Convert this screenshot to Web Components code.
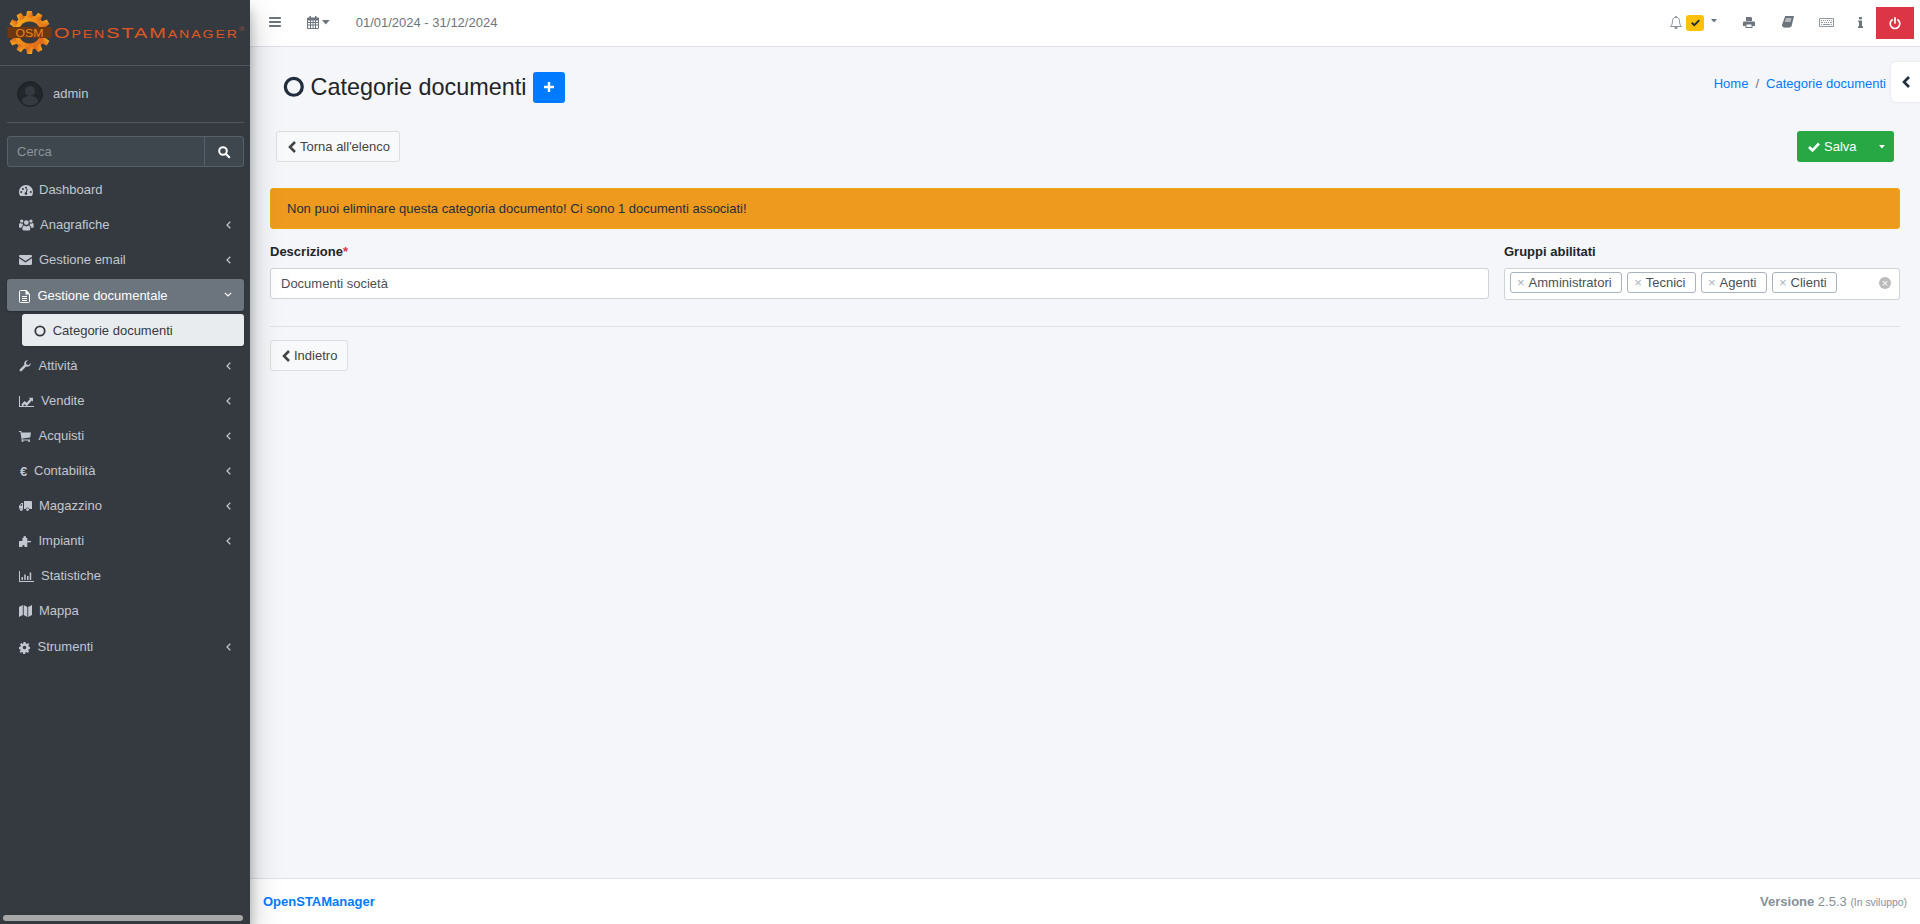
<!DOCTYPE html>
<html lang="it">
<head>
<meta charset="utf-8">
<title>Categorie documenti</title>
<style>
  html, body { margin: 0; height: 100%; }
  body { font: 13px/1.5 "Liberation Sans", Arial, sans-serif; color: #212529; overflow: hidden; }
</style>
</head>
<body>
<osm-app>
  <osm-sidebar slot="sidebar">
    <osm-nav-item icon="dashboard" w="20">Dashboard</osm-nav-item>
    <osm-nav-item icon="users" w="21" size="1.05" arrow>Anagrafiche</osm-nav-item>
    <osm-nav-item icon="envelope" w="20" arrow>Gestione email</osm-nav-item>
    <osm-nav-item icon="file" w="18.5" arrow open active style="margin-top:1px">Gestione documentale</osm-nav-item>
    <osm-nav-item icon="circle" w="18.7" sub>Categorie documenti</osm-nav-item>
    <osm-nav-item icon="wrench" w="19.5" arrow>Attività</osm-nav-item>
    <osm-nav-item icon="linechart" w="22" arrow>Vendite</osm-nav-item>
    <osm-nav-item icon="cart" w="19.5" arrow>Acquisti</osm-nav-item>
    <osm-nav-item icon="euro" w="15" arrow>Contabilità</osm-nav-item>
    <osm-nav-item icon="truck" w="20" arrow>Magazzino</osm-nav-item>
    <osm-nav-item icon="puzzle" w="19.5" arrow>Impianti</osm-nav-item>
    <osm-nav-item icon="barchart" w="22">Statistiche</osm-nav-item>
    <osm-nav-item icon="map" w="20">Mappa</osm-nav-item>
    <osm-nav-item icon="cog" w="18.5" arrow style="margin-top:1px">Strumenti</osm-nav-item>
  </osm-sidebar>
  <osm-topbar slot="topbar"></osm-topbar>
  <osm-page slot="page"></osm-page>
  <osm-footer slot="footer"></osm-footer>
</osm-app>

<script>
// icon shapes, all filled with currentColor unless they say otherwise
const ICONS = {
  dashboard: [14, 11, '<path fill-rule="evenodd" d="M7 0C3.1 0 0 3.1 0 7c0 1.5.4 2.9 1.2 4h11.6c.8-1.1 1.2-2.5 1.2-4 0-3.9-3.1-7-7-7zM1.2 7a1 1 0 1 0 2 0 1 1 0 1 0-2 0zM2.9 4a1 1 0 1 0 2 0 1 1 0 1 0-2 0zM6 2.800a1 1 0 1 0 2 0 1 1 0 1 0-2 0zM10.800 7a1 1 0 1 0 2 0 1 1 0 1 0-2 0zM5.600 8.500a1.400 1.400 0 1 0 2.800 0c0-.5-.2-.9-.6-1.100l.9-3.400-1-.3-.9 3.400c-.7.1-1.200.7-1.200 1.400z"/>'],
  users: [14, 11, '<circle cx="7" cy="3.400" r="2.300"/><path d="M3.400 10.200c-.3-1 0-3.900 1.400-3.900.6.5 1.300.8 2.200.8s1.600-.3 2.200-.8c1.400 0 1.700 2.900 1.400 3.900-.2.5-.6.8-1.100.8H4.500c-.5 0-.9-.3-1.100-.8z"/><circle cx="2.600" cy="2" r="1.600"/><circle cx="11.400" cy="2" r="1.600"/><path d="M0 6.200C0 5 .3 3.900 1.200 3.900c.5.4 1 .6 1.600.6.1 0 .4 0 .7-.1-.1.5.1 1.100.5 1.500-.8.3-1.500 1.100-1.700 2.500H.9C.3 8.400 0 7.900 0 6.200zM14 6.200c0-1.200-.3-2.300-1.200-2.300-.5.4-1 .6-1.600.6-.1 0-.4 0-.7-.1.1.5-.1 1.100-.5 1.500.8.3 1.500 1.100 1.700 2.500h1.400c.6 0 .9-.5.9-2.200z"/>'],
  envelope: [13, 10, '<path d="M0 1.200C0 .5.5 0 1.200 0h10.600c.7 0 1.200.5 1.200 1.200v.6L6.500 6 0 1.800z"/><path d="M0 3.200l6.500 4.200L13 3.200v5.600c0 .7-.5 1.200-1.200 1.200H1.200C.5 10 0 9.500 0 8.800z"/>'],
  file: [11, 13, '<path fill="none" stroke="currentColor" d="M1.500.5h5.300l3.700 3.700v7.300a1 1 0 0 1-1 1h-8a1 1 0 0 1-1-1v-10a1 1 0 0 1 1-1z"/><path d="M6.500 0h1l3 3.500v1H6.500zM3 6h5v1H3zM3 8h5v1H3zM3 10h5v1H3z"/>'],
  circle: [12, 12, '<circle cx="6" cy="6" r="4.700" fill="none" stroke="currentColor" stroke-width="1.800"/>'],
  wrench: [12, 12, '<path d="M11.800 3a3.500 3.500 0 0 1-4.700 3.600L2.800 11a1.300 1.300 0 0 1-1.900-1.800L5.300 4.800A3.500 3.500 0 0 1 9 .2L7 2.200l.4 2.300 2.400.5z"/>'],
  linechart: [15, 11, '<path d="M0 0h1v10h14v1H0z"/><path d="M2.500 8.300l3-3.300 2.200 1.800 3.300-3.800-1.200-1.200H14v4l-1.200-1.300-5 5.700-2.300-2-2.300 2.700z"/>'],
  barchart: [15, 11, '<path d="M0 0h1v10h14v1H0zM2.500 6H4v3H2.500zM5.200 3.500h1.500V9H5.200zM8 5h1.500v4H8zM10.700 1.500h1.500V9h-1.500z"/>'],
  cart: [12, 11, '<path d="M0 0h2.200l.4 1.500H12l-.8 5-7.800 1 .2.900H11v1H2.800L1.400 1H0z"/><circle cx="3.500" cy="10" r="1"/><circle cx="10" cy="10" r="1"/>'],
  truck: [13, 10, '<path d="M5 0h7a1 1 0 0 1 1 1v7H10.500a2 2 0 0 0-3.900 0H5z"/><path fill-rule="evenodd" d="M4 2v6h-.6a2 2 0 0 0-2.800-.4V8H0V5l2.300-3zM1.100 4.800h2V3H2.500z"/><circle cx="2.300" cy="8.600" r="1.400"/><circle cx="8.600" cy="8.600" r="1.400"/>'],
  puzzle: [12, 11, '<path d="M3.400 2h1.300C4.300 1.500 4.200 1.100 4.500.6 5.100-.2 6.400-.2 7 .6c.3.5.2.9-.2 1.400h1.500v3.300c.5-.5 1-.7 1.600-.5.3.1.5.3.9.2.3 0 .6-.1 1.200-.1v1.400c-.6-.1-.9-.2-1.200-.1-.4 0-.6.2-.9.3-.6.2-1.100 0-1.600-.5V11H5.400c.3-.4.4-1 0-1.500-.5-.7-1.400-.7-1.900 0-.4.5-.3 1.100 0 1.500H0V5h3.400z"/>'],
  map: [13, 12, '<path d="M0 2l3.800-2v10L0 12zM4.700 0l3.600 2v10l-3.600-2zM13 0v10l-3.800 2V2z"/>'],
  cog: [11, 11, '<path fill-rule="evenodd" d="M4.500 0h2l.3 1.500 1.100.5L9.200 1l1 1.200-.9 1.300.4 1.100 1.300.4v1.900l-1.300.3-.5 1.100.9 1.300-1.300 1.300-1.300-.9-1.100.4-.3 1.500h-2l-.2-1.500-1.100-.4-1.300.9L.7 9.600l.9-1.300-.5-1.100L0 6.900V5l1.400-.3.500-1.100-.9-1.300L2.300 1l1.300.9.700-.4zM3.700 5.500a1.800 1.800 0 1 0 3.600 0 1.800 1.800 0 1 0-3.600 0z"/>'],
  search: [12, 12, '<circle cx="5" cy="5" r="3.800" fill="none" stroke="currentColor" stroke-width="2"/><path d="M7.500 9L9 7.500l3 3a1 1 0 0 1-1.500 1.500z"/>'],
  bars: [12, 10, '<path d="M.7 0h10.600a.7.7 0 0 1 .7.7v.6a.7.7 0 0 1-.7.7H.7a.7.7 0 0 1-.7-.7V.7A.7.7 0 0 1 .7 0zM.7 4h10.600a.7.7 0 0 1 .7.7v.6a.7.7 0 0 1-.7.7H.7a.7.7 0 0 1-.7-.7v-.6A.7.7 0 0 1 .7 4zM.7 8h10.600a.7.7 0 0 1 .7.7v.6a.7.7 0 0 1-.7.7H.7a.7.7 0 0 1-.7-.7v-.6A.7.7 0 0 1 .7 8z"/>'],
  calendar: [12, 13, '<path fill-rule="evenodd" d="M2.500 0h1.500v1.500h4V0h1.500v1.500H11a1 1 0 0 1 1 1V12a1 1 0 0 1-1 1H1a1 1 0 0 1-1-1V2.500a1 1 0 0 1 1-1h1.500zM1 4.500V6h2V4.500zM4 4.500V6h1.600V4.500zM6.500 4.500V6H8V4.500zM9 4.500V6h2V4.500zM1 7v1.500h2V7zM4 7v1.500h1.600V7zM6.500 7v1.500H8V7zM9 7v1.500h2V7zM1 9.500V12h2V9.500zM4 9.500V12h1.600V9.500zM6.500 9.500V12H8V9.500zM9 9.500V12h2V9.500z"/>'],
  caret: [7, 4, '<path d="M0 0h7L3.500 4z"/>'],
  bell: [12, 13, '<path fill="none" stroke="currentColor" stroke-width=".8" d="M6 1.200c2.300 0 3.500 1.700 3.500 3.600 0 3 .7 4.300 1.900 5.700H.6c1.200-1.400 1.900-2.700 1.900-5.700C2.500 2.900 3.700 1.200 6 1.200z"/><path d="M5.400 0h1.200v1.500H5.400zM4.500 11.300h3A1.500 1.500 0 0 1 6 13a1.500 1.500 0 0 1-1.500-1.700z"/>'],
  print: [12, 11, '<path fill-rule="evenodd" d="M3 0h5l1 1v3H3zM1 4.500h10a1 1 0 0 1 1 1V9H9.500v2h-7V9H0V5.500a1 1 0 0 1 1-1zM3.500 7.500V10h5V7.500z"/>'],
  book: [12, 12, '<path fill-rule="evenodd" d="M3.200 0H12l-.2 1-2.200 9a1.400 1.400 0 0 1-1.300 1H1.500C.6 11 0 10.200 0 9.300c0-.3 0-.5.1-.8zM3.800 2.500l-.2 1h5.600l.2-1zM3.200 4.500l-.2 1h5.600l.2-1z"/><path d="M1.300 10h7.200l-.2 1.200-.8.800H1.500z" opacity=".6"/>'],
  keyboard: [15, 9, '<path fill-rule="evenodd" opacity=".75" d="M1 0h13a1 1 0 0 1 1 1v7a1 1 0 0 1-1 1H1a1 1 0 0 1-1-1V1a1 1 0 0 1 1-1zM1 1v7h13V1zM2 2h1v1H2zM4 2h1v1H4zM6 2h1v1H6zM8 2h1v1H8zM10 2h1v1h-1zM12 2h1v1h-1zM2 4h2v1H2zM5 4h1v1H5zM7 4h1v1H7zM9 4h1v1H9zM11 4h2v1h-2zM2 6h1v1H2zM4 6h7v1H4zM12 6h1v1h-1z"/>'],
  info: [5, 11, '<path d="M1 0h3v2.200H1zM.3 3.400H4v5.800h1V11H0V9.200h1V5.300H.3z"/>'],
  power: [12, 12, '<path fill="none" stroke="currentColor" stroke-width="1.700" stroke-linecap="round" d="M3.200 2.800a4.800 4.800 0 1 0 5.600 0M6 .9v5"/>'],
  check: [12, 10, '<path fill="none" stroke="currentColor" stroke-width="2.600" d="M1 5l3.500 3.300L11 1.500"/>'],
  plus: [10, 10, '<path d="M3.800 0h2.400v3.800H10v2.400H6.200V10H3.800V6.200H0V3.800h3.800z"/>'],
  chevron: [8, 12, '<path fill="none" stroke="currentColor" stroke-width="2.600" d="M7 1L2 6l5 5"/>'],
  thinleft: [5, 8, '<path fill="none" stroke="currentColor" stroke-width="1.200" d="M4.300.8L1 4l3.300 3.200"/>'],
  thindown: [8, 5, '<path fill="none" stroke="currentColor" stroke-width="1.200" d="M.8.8L4 4 7.200.8"/>']
};

class OsmIcon extends HTMLElement {
  static get observedAttributes() { return ['name', 'size']; }
  constructor() {
    super();
    this.attachShadow({ mode: 'open' });
  }
  connectedCallback() { this.render(); }
  attributeChangedCallback() { this.render(); }
  render() {
    const icon = ICONS[this.getAttribute('name')];
    if (!icon) return;
    const scale = parseFloat(this.getAttribute('size') || '1');
    const [w, h, body] = icon;
    this.shadowRoot.innerHTML = `
      <style>
        :host { display: inline-flex; align-items: center; justify-content: center; flex: none; }
        svg { display: block; fill: currentColor; overflow: visible; }
      </style>
      <svg width="${w * scale}" height="${h * scale}" viewBox="0 0 ${w} ${h}">${body}</svg>`;
  }
}
customElements.define('osm-icon', OsmIcon);

class OsmApp extends HTMLElement {
  constructor() {
    super();
    this.attachShadow({ mode: 'open' }).innerHTML = `
      <style>
        :host { display: grid; grid-template-columns: 250px 1fr; height: 924px; background: #f4f6f9; }
        .side { display: block; position: relative; z-index: 2;
                box-shadow: 0 14px 28px rgba(0,0,0,.25), 0 10px 10px rgba(0,0,0,.22); }
        .main { display: flex; flex-direction: column; min-width: 0; }
        .grow { flex: 1; min-height: 0; display: flex; flex-direction: column; }
      </style>
      <div class="side"><slot name="sidebar"></slot></div>
      <div class="main">
        <slot name="topbar"></slot>
        <div class="grow"><slot name="page"></slot></div>
        <slot name="footer"></slot>
      </div>`;
  }
}
customElements.define('osm-app', OsmApp);

class OsmLogo extends HTMLElement {
  constructor() {
    super();
    this.attachShadow({ mode: 'open' }).innerHTML = `
      <style>
        :host { display: flex; align-items: center; height: 66px; padding-left: 7px; box-sizing: border-box;
                border-bottom: 1px solid #4b545c; }
        svg { flex: none; display: block; }
        .name { margin-left: 2px; color: #e2561f; font-size: 15.500px; line-height: 1; white-space: nowrap;
                font-family: "Liberation Sans", sans-serif; font-variant: small-caps; letter-spacing: 1.500px;
                transform: scale(1.284, .98); transform-origin: left center; }
        sup { font-size: 6px; color: #a8523a; vertical-align: 7px; letter-spacing: 0; line-height: 0; }
      </style>
      <svg width="45" height="45" viewBox="-22.500 -22.500 45 45">
        <defs>
          <linearGradient id="g" x1="0" y1="0" x2="1" y2=".6">
            <stop offset="0" stop-color="#f6b81c"/><stop offset="1" stop-color="#e2661a"/>
          </linearGradient>
        </defs>
        <g fill="url(#g)">
          <circle r="17"/>
          ${[0, 30, 60, 90, 120, 150, 180, 210, 240, 270, 300, 330].map(a =>
            `<path transform="rotate(${a})" d="M-3.500 -15L-2.500 -21.500H2.500L3.500 -15z"/>`).join('')}
        </g>
        <circle r="11" fill="#3a3a3a"/>
        <rect x="-22" y="-5.500" width="44" height="11" fill="#6e3711"/>
        <text x="0" y="4" text-anchor="middle" font-family="Liberation Sans, sans-serif" font-size="11.500"
              fill="#e8891e" textLength="28" lengthAdjust="spacingAndGlyphs">OSM</text>
      </svg>
      <span class="name">OpenSTAManager<sup>®</sup></span>`;
  }
}
customElements.define('osm-logo', OsmLogo);

class OsmSidebar extends HTMLElement {
  constructor() {
    super();
    this.attachShadow({ mode: 'open' }).innerHTML = `
      <style>
        :host { display: flex; flex-direction: column; height: 924px; background: #343a40; color: #c2c7d0; }
        .user { display: flex; align-items: center; gap: 10px; height: 57px; box-sizing: border-box; margin: 0 6px 0 7px;
                padding: 0 0 1px 10px; border-bottom: 1px solid #4f5962; }
        .user svg { display: block; }
        form { display: flex; height: 31px; margin: 13px 6px 6px 7px; box-sizing: border-box;
               border: 1px solid #56606a; border-radius: 3px; background: #3f474e; }
        .q { flex: 1; padding-left: 9px; line-height: 29px; color: #8d949b; }
        .btn { width: 38px; border-left: 1px solid #56606a; display: flex; align-items: center; justify-content: center; color: #fff; }
        nav { display: flex; flex-direction: column; gap: 3px; margin: 0 6px 0 7px; }
        .bar { margin: auto 7px 3px 3px; height: 6px; border-radius: 3px; background: #a8a8a8; }
      </style>
      <osm-logo></osm-logo>
      <div class="user">
        <svg width="26" height="26" viewBox="0 0 26 26">
          <circle cx="13" cy="13" r="12.300" fill="#22272c" stroke="#191d21" stroke-width="1"/>
          <circle cx="13" cy="10" r="5" fill="#343a40"/>
          <path d="M4.500 21c1-4.500 4-6 8.500-6s7.500 1.500 8.500 6a12 12 0 0 1-17 0z" fill="#343a40"/>
        </svg>
        <span>admin</span>
      </div>
      <form>
        <div class="q">Cerca</div>
        <div class="btn"><osm-icon name="search"></osm-icon></div>
      </form>
      <nav><slot></slot></nav>
      <div class="bar"></div>`;
  }
}
customElements.define('osm-sidebar', OsmSidebar);

class OsmNavItem extends HTMLElement {
  constructor() {
    super();
    this.attachShadow({ mode: 'open' });
  }
  connectedCallback() {
    const name = this.getAttribute('icon');
    const w = this.getAttribute('w');
    const size = this.getAttribute('size') || '1';
    const glyph = name === 'euro'
      ? '<b class="euro">€</b>'
      : `<osm-icon name="${name}" size="${size}"></osm-icon>`;
    const arrow = this.hasAttribute('open')
      ? '<osm-icon class="arrow down" name="thindown"></osm-icon>'
      : this.hasAttribute('arrow') ? '<osm-icon class="arrow" name="thinleft"></osm-icon>' : '';
    this.shadowRoot.innerHTML = `
      <style>
        :host { display: flex; align-items: center; height: 32px; box-sizing: border-box; padding: 2px 0 0 12px;
                border-radius: 3px; color: #c2c7d0; }
        :host([active]) { background: #6c757d; color: #fff; box-shadow: 0 1px 2px rgba(0,0,0,.25); }
        :host([sub]) { margin-left: 15px; background: #e9ecef; color: #343a40; box-shadow: 0 1px 3px rgba(0,0,0,.12); }
        .i { display: flex; align-items: center; flex: none; width: ${w}px; }
        .euro { font-size: 13px; line-height: 1; padding-left: 1px; }
        .label { flex: 1; white-space: nowrap; }
        .arrow { margin-right: 13.500px; color: #c2c7d0; }
        .arrow.down { margin-right: 12px; margin-top: -3px; color: #fff; }
      </style>
      <span class="i">${glyph}</span>
      <span class="label"><slot></slot></span>
      ${arrow}`;
  }
}
customElements.define('osm-nav-item', OsmNavItem);

class OsmTopbar extends HTMLElement {
  constructor() {
    super();
    this.attachShadow({ mode: 'open' }).innerHTML = `
      <style>
        :host { display: flex; align-items: center; height: 47px; box-sizing: border-box; flex: none;
                background: #fff; border-bottom: 1px solid #dee2e6; color: #6c757d; padding: 0 6px 2px 19px; }
        .cal { display: flex; align-items: center; gap: 3px; margin-left: 26px; }
        .date { margin-left: 26px; padding-top: 1px; }
        .right { margin-left: auto; display: flex; align-items: center; height: 44px; }
        .bell { display: flex; align-items: center; width: 70px; padding-left: 10px; box-sizing: border-box; }
        .badge { display: flex; align-items: center; justify-content: center; width: 18px; height: 16px; margin-left: 4px;
                 margin-top: 2px; border-radius: 3px; background: #ffc107; color: #1f2d3d; }
        .drop { margin-left: 7px; margin-top: -2px; }
        .cell { display: flex; align-items: center; justify-content: center; width: 38px; }
        .off { display: flex; align-items: center; justify-content: center; width: 38px; height: 32px;
               margin-top: 2px; background: #dc3545; color: #fff; }
      </style>
      <osm-icon name="bars"></osm-icon>
      <div class="cal"><osm-icon name="calendar"></osm-icon><osm-icon name="caret" size="1.100"></osm-icon></div>
      <div class="date">01/01/2024 - 31/12/2024</div>
      <div class="right">
        <div class="bell">
          <osm-icon name="bell"></osm-icon>
          <span class="badge"><osm-icon name="check" size=".75"></osm-icon></span>
          <osm-icon class="drop" name="caret" size=".85"></osm-icon>
        </div>
        <div class="cell"><osm-icon name="print"></osm-icon></div>
        <div class="cell" style="width:39px"><osm-icon name="book"></osm-icon></div>
        <div class="cell"><osm-icon name="keyboard"></osm-icon></div>
        <div class="cell" style="width:31px"><osm-icon name="info"></osm-icon></div>
        <div class="off"><osm-icon name="power"></osm-icon></div>
      </div>`;
  }
}
customElements.define('osm-topbar', OsmTopbar);

class OsmButton extends HTMLElement {
  constructor() {
    super();
    this.attachShadow({ mode: 'open' }).innerHTML = `
      <style>
        :host { display: inline-flex; align-items: center; gap: 4px; height: 31px; box-sizing: border-box; padding: 0 9.500px 0 11px;
                border: 1px solid #ddd; border-radius: 3px; background: #f8f9fa; color: #444; white-space: nowrap; }
      </style>
      <osm-icon name="chevron"></osm-icon><slot></slot>`;
  }
}
customElements.define('osm-button', OsmButton);

class OsmChip extends HTMLElement {
  constructor() {
    super();
    this.attachShadow({ mode: 'open' }).innerHTML = `
      <style>
        :host { display: inline-flex; align-items: center; height: 21px; box-sizing: border-box; padding: 0 9.500px 0 6px;
                border: 1px solid #aab2bd; border-radius: 3px; background: #fff; color: #495057; white-space: nowrap; }
        i { font-style: normal; color: #aab2bd; margin-right: 4px; }
      </style>
      <i>×</i><slot></slot>`;
  }
}
customElements.define('osm-chip', OsmChip);

class OsmPage extends HTMLElement {
  constructor() {
    super();
    this.attachShadow({ mode: 'open' }).innerHTML = `
      <style>
        :host { display: block; position: relative; flex: 1; }
        header { display: flex; justify-content: space-between; height: 84px; box-sizing: border-box;
                 padding: 24px 34px 0 33px; }
        .title { display: flex; align-items: center; height: 32px; color: #1f2d3d; }
        h1 { margin: 0 0 0 6px; font-size: 23.400px; font-weight: 400; line-height: 32px; color: #212529; white-space: nowrap; }
        .add { display: flex; align-items: center; justify-content: center; width: 32px; height: 31px; margin-left: 7px;
               border-radius: 3px; background: #007bff; color: #fff; }
        .crumbs { display: flex; gap: 7px; height: 26px; line-height: 26px; color: #6c757d; }
        a { color: #007bff; text-decoration: none; }
        .tools { display: flex; justify-content: space-between; padding: 0 26px; margin-bottom: 26px; }
        .save { display: flex; height: 31px; border-radius: 3px; background: #28a745; color: #fff; }
        .save .go { display: flex; align-items: center; gap: 4px; padding-left: 11px; width: 73px; box-sizing: border-box; }
        .save .more { display: flex; align-items: center; justify-content: center; width: 24px; }
        .body { padding: 0 20px; }
        .alert { display: flex; align-items: center; height: 41px; box-sizing: border-box; padding: 0 16px; margin-bottom: 13px;
                 background: #ee9a1f; border: 1px solid #eca70f; border-radius: 3px; color: #1f2d3d; }
        .grid { display: grid; grid-template-columns: 1fr 396px; column-gap: 15px; }
        label { display: block; font-weight: 700; line-height: 20px; margin-bottom: 6px; color: #212529; white-space: nowrap; }
        label b { color: #dc3545; }
        .input { height: 31px; box-sizing: border-box; padding: 0 10px; line-height: 29px; background: #fff; color: #495057;
                 border: 1px solid #ced4da; border-radius: 3px; }
        .multi { display: flex; align-items: flex-start; gap: 5px; height: 32px; box-sizing: border-box; padding: 3px 0 0 5px; position: relative;
                 background: #fff; border: 1px solid #ced4da; border-radius: 3px; }
        .clear { position: absolute; right: 8px; top: 8px; width: 12px; height: 12px; border-radius: 50%; background: #bbb;
                 color: #fff; font-size: 11px; line-height: 12px; text-align: center; }
        hr { height: 1px; border: 0; background: #dee2e6; margin: 26px 0 13px; }
        .tab { position: absolute; right: 0; top: 15px; width: 29px; height: 40px; background: #fff; border-radius: 5px 0 0 5px;
               box-shadow: 0 0 3px rgba(0,0,0,.1); display: flex; align-items: center; justify-content: center; color: #1f2d3d; }
      </style>
      <header>
        <div class="title">
          <osm-icon name="circle" size="1.800"></osm-icon>
          <h1>Categorie documenti</h1>
          <span class="add"><osm-icon name="plus"></osm-icon></span>
        </div>
        <div class="crumbs"><a>Home</a><span>/</span><a>Categorie documenti</a></div>
      </header>
      <div class="tools">
        <osm-button>Torna all'elenco</osm-button>
        <div class="save">
          <div class="go"><osm-icon name="check"></osm-icon>Salva</div>
          <div class="more"><osm-icon name="caret" size=".85"></osm-icon></div>
        </div>
      </div>
      <div class="body">
        <div class="alert">Non puoi eliminare questa categoria documento! Ci sono 1 documenti associati!</div>
        <div class="grid">
          <div><label>Descrizione<b>*</b></label><div class="input">Documenti società</div></div>
          <div>
            <label>Gruppi abilitati</label>
            <div class="multi">
              <osm-chip>Amministratori</osm-chip>
              <osm-chip>Tecnici</osm-chip>
              <osm-chip>Agenti</osm-chip>
              <osm-chip>Clienti</osm-chip>
              <span class="clear">×</span>
            </div>
          </div>
        </div>
        <hr>
        <osm-button>Indietro</osm-button>
      </div>
      <div class="tab"><osm-icon name="chevron"></osm-icon></div>`;
  }
}
customElements.define('osm-page', OsmPage);

class OsmFooter extends HTMLElement {
  constructor() {
    super();
    this.attachShadow({ mode: 'open' }).innerHTML = `
      <style>
        :host { display: flex; align-items: center; justify-content: space-between; flex: none; height: 46px; box-sizing: border-box;
                padding: 0 13px; background: #fff; border-top: 1px solid #dee2e6; color: #869099; }
        b.brand { color: #007bff; }
        small { font-size: 10.400px; }
      </style>
      <b class="brand">OpenSTAManager</b>
      <div><b>Versione</b> 2.5.3 <small>(In sviluppo)</small></div>`;
  }
}
customElements.define('osm-footer', OsmFooter);
</script>
</body>
</html>
